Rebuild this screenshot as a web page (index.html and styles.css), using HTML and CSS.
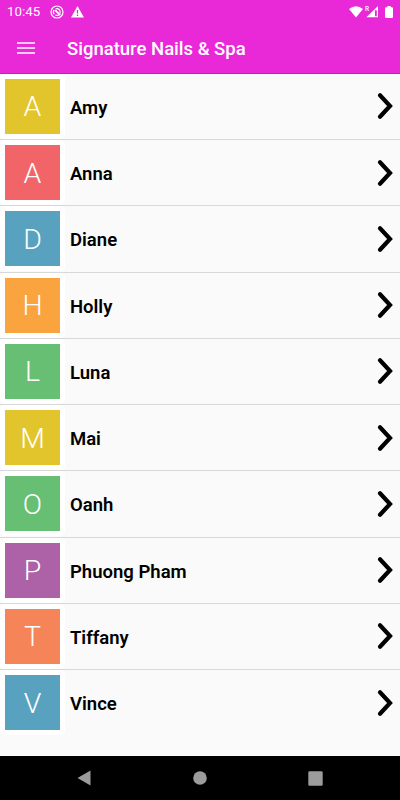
FILE: index.html
```html
<!DOCTYPE html>
<html lang="en">
<head>
  <meta charset="UTF-8" />
  <meta name="viewport" content="width=device-width, initial-scale=1.0"/>
  <title>Signature Nails &amp; Spa</title>
  <link rel="stylesheet" href="styles.css">
</head>
<body>
  <header>
    <div class="status-bar">
      <span class="time">10:45</span>
      <svg class="sync-icon" width="14" height="14" viewBox="0 0 14 14" fill="none" stroke="#fff">
        <circle cx="7" cy="7" r="6" stroke-width="1.2"/>
        <path d="M4.300 9.200A3.400 3.400 0 0 1 4.200 4.800M5.600 4A3.400 3.400 0 0 1 10 8.500M8.800 9.900A3.400 3.400 0 0 1 5.400 9.900" stroke-width="1.2"/>
        <path d="M5.200 5.200l5 5" stroke-width="1.800"/>
      </svg>
      <svg class="warning-icon" width="13" height="12" viewBox="0 0 13 12">
        <path d="M6.5 0L13 11.5H0z" fill="#fff"/>
        <path d="M6.5 4v3.5M6.5 8.6v1.4" stroke="#e928d8" stroke-width="1.3"/>
      </svg>
      <div class="status-right">
        <svg width="14" height="12" viewBox="0 0 14 12">
          <path d="M0 3Q7-2.6 14 3L7 11.5z" fill="#fff"/>
        </svg>
        <svg class="signal-icon" width="14" height="13" viewBox="0 0 14 13">
          <text x="0" y="5.5" class="roaming">R</text>
          <path d="M13 1v11.300H1.300z" fill="#fff"/>
          <path d="M10 5.200h1.800v6H10z" fill="#e928d8"/>
        </svg>
        <svg width="8" height="12" viewBox="0 0 8 12">
          <path d="M2.300 0h3.400v1.200H7q1 0 1 1V11q0 1-1 1H1q-1 0-1-1V2.200q0-1 1-1h1.300z" fill="#fff"/>
        </svg>
      </div>
    </div>
    <div class="toolbar">
      <svg class="menu-icon" width="18" height="12" viewBox="0 0 18 12">
        <path d="M0 1h18M0 6h18M0 11h18" stroke="#fff" stroke-width="1.600"/>
      </svg>
      <h1>Signature Nails &amp; Spa</h1>
    </div>
  </header>

  <svg class="defs" width="0" height="0">
    <symbol id="chevron" viewBox="0 0 18 28">
      <path d="M4 3.300L14 14L4 24.700" fill="none" stroke="#000" stroke-width="4.200" stroke-linecap="round"/>
    </symbol>
  </svg>

  <main>
    <ul class="staff-list">
      <li><span class="avatar yellow">A</span><span class="name">Amy</span><svg class="chevron"><use href="#chevron"/></svg></li>
      <li><span class="avatar red">A</span><span class="name">Anna</span><svg class="chevron"><use href="#chevron"/></svg></li>
      <li><span class="avatar blue">D</span><span class="name">Diane</span><svg class="chevron"><use href="#chevron"/></svg></li>
      <li><span class="avatar amber">H</span><span class="name">Holly</span><svg class="chevron"><use href="#chevron"/></svg></li>
      <li><span class="avatar green">L</span><span class="name">Luna</span><svg class="chevron"><use href="#chevron"/></svg></li>
      <li><span class="avatar yellow">M</span><span class="name">Mai</span><svg class="chevron"><use href="#chevron"/></svg></li>
      <li><span class="avatar green">O</span><span class="name">Oanh</span><svg class="chevron"><use href="#chevron"/></svg></li>
      <li><span class="avatar purple">P</span><span class="name">Phuong Pham</span><svg class="chevron"><use href="#chevron"/></svg></li>
      <li><span class="avatar orange">T</span><span class="name">Tiffany</span><svg class="chevron"><use href="#chevron"/></svg></li>
      <li><span class="avatar blue">V</span><span class="name">Vince</span><svg class="chevron"><use href="#chevron"/></svg></li>
    </ul>
  </main>

  <footer>
    <svg width="14" height="16" viewBox="0 0 14 16"><path d="M13.500.5v15L.5 8z" fill="#9c9c9c"/></svg>
    <svg width="14" height="14" viewBox="0 0 14 14"><circle cx="7" cy="7" r="6.800" fill="#9c9c9c"/></svg>
    <svg width="15" height="15" viewBox="0 0 15 15"><rect x=".3" y=".3" width="14.400" height="14.400" rx="1.300" fill="#9c9c9c"/></svg>
  </footer>
</body>
</html>
```

FILE: styles.css
```css
:root {
  --primary: #e928d8;
  --light: #fafafa;
  --line: #d8d8d8;
}

* {
  margin: 0;
  padding: 0;
  box-sizing: border-box;
  font-family: Roboto, sans-serif;
}

body {
  background-color: var(--light);
  color: #000;
  height: 100vh;
  display: flex;
  flex-direction: column;
  overflow: hidden;
}

header {
  height: 73.75px;
  background-color: var(--primary);
  border-bottom: 1px solid #dc10c9;
  color: white;
}

.status-bar {
  height: 23px;
  display: flex;
  align-items: center;
  padding: 0 7px;
}

.time {
  width: 43px;
  font-size: 13.3px;
}

.warning-icon {
  margin-left: 7px;
}

.status-right {
  margin-left: auto;
  display: flex;
  align-items: center;
  gap: 6px;
}

.signal-icon {
  margin-left: -4px;
}

.roaming {
  font-size: 6.5px;
  font-weight: 500;
  fill: white;
}

.toolbar {
  height: 50px;
  display: flex;
  align-items: center;
  padding-left: 17px;
}

.toolbar h1 {
  margin-left: 32px;
  padding-top: 2px;
  font-size: 18.5px;
  font-weight: 500;
}

.defs {
  display: block;
}

main {
  flex: 1;
}

.staff-list {
  list-style: none;
}

.staff-list li {
  height: 66.25px;
  display: flex;
  align-items: center;
  padding-right: 6px;
  border-bottom: 1px solid var(--line);
}

.staff-list li:last-child {
  border-bottom-color: transparent;
}

.avatar {
  width: 65px;
  height: 65px;
  display: flex;
  align-items: center;
  justify-content: center;
  padding-top: 1px;
  border: 5px solid white;
  border-radius: 5px;
  background-clip: padding-box;
  color: white;
  font-size: 28.5px;
  font-weight: 300;
}

.yellow { background-color: #e2c52d; }
.red { background-color: #f16467; }
.blue { background-color: #58a2bf; }
.amber { background-color: #faa43f; }
.green { background-color: #67bf74; }
.purple { background-color: #ad62a7; }
.orange { background-color: #f58559; }

.name {
  margin-left: 5px;
  padding-top: 3px;
  font-size: 18.5px;
  font-weight: 600;
}

.chevron {
  width: 18px;
  height: 28px;
  margin-left: auto;
}

footer {
  height: 44px;
  display: flex;
  align-items: center;
  justify-content: space-between;
  padding: 0 77px 0 77px;
  background-color: black;
}
```
